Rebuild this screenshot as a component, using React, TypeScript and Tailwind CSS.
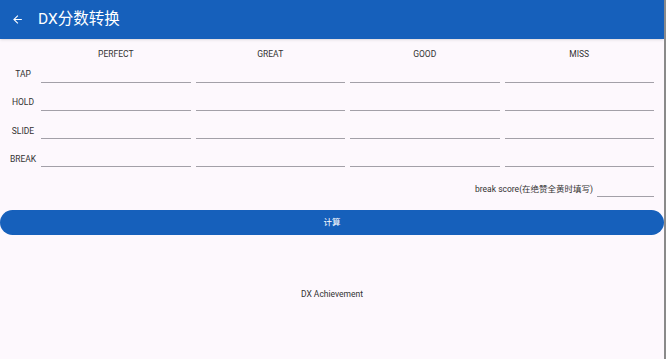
import React from "react";

const cols = ["PERFECT", "GREAT", "GOOD", "MISS"];
const rows = ["TAP", "HOLD", "SLIDE", "BREAK"];

export default function App() {
  return (
    <div
      className="w-[666px] h-[359px] bg-[#fdf8fd] flex overflow-hidden"
      style={{ fontFamily: 'Roboto, "Noto Sans CJK SC", sans-serif' }}
    >
      <div className="w-[664px] flex flex-col">
        <div className="h-[39px] bg-[#1660bb] flex items-center text-white shadow-sm">
          <svg viewBox="0 0 24 24" className="w-[13px] h-[13px] ml-[11px]" fill="white">
            <path d="M20 11H7.83l5.59-5.59L12 4l-8 8 8 8 1.41-1.41L7.83 13H20v-2z" />
          </svg>
          <span className="ml-[14px] text-[15.5px] font-normal leading-none">DX分数转换</span>
        </div>

        <div className="flex mt-[9px] h-[12px] pl-[41px] pr-[10px] gap-[5px]">
          {cols.map((c) => (
            <div key={c} className="flex-1 text-center text-[8.5px] leading-[12px] text-[#333]">
              {c}
            </div>
          ))}
        </div>

        {rows.map((r) => (
          <div key={r} className="flex h-[28.3px] items-start">
            <div className="w-[41px] pl-[5px] pt-[8px] text-center text-[8.5px] leading-[12px] text-[#333]">
              {r}
            </div>
            <div className="flex-1 flex gap-[5px] pr-[10px]">
              {cols.map((c) => (
                <div key={c} className="flex-1 h-[22.5px] border-b-[1.5px] border-[#a3a0a8]" />
              ))}
            </div>
          </div>
        ))}

        <div className="flex justify-end items-start pr-[10px] mt-[9px] h-[20px]">
          <span className="text-[8.5px] leading-[14px] text-[#333]">break score(在绝赞全黄时填写)</span>
          <div className="ml-[4px] w-[57px] h-[15px] border-b-[1.5px] border-[#a3a0a8]" />
        </div>

        <div className="mt-[8px] h-[25px] rounded-full bg-[#1660bb] flex items-center justify-center text-white text-[8.5px]">
          计算
        </div>

        <div className="mt-[52px] text-center text-[8.5px] leading-[14px] text-[#333]">DX Achievement</div>
      </div>
      <div className="w-[2px] h-full bg-[#8a8a8a]" />
    </div>
  );
}
